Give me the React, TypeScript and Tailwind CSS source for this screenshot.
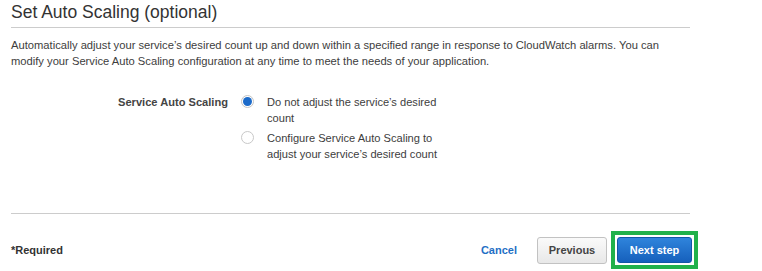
import React from "react";

export default function App() {
  return (
    <div
      className="w-[762px] h-[271px] bg-white overflow-hidden text-[#444]"
      style={{ fontFamily: '"Liberation Sans", Arial, sans-serif' }}
    >
      <div className="pl-[11px]">
        <div className="w-[679px]">
          <div className="h-[28px] border-b border-[#cccccc] text-[17.5px] leading-[24px] text-[#333]">
            Set Auto Scaling (optional)
          </div>
          <p className="mt-[9px] w-[665px] text-[11.2px] leading-[16px] text-[#3d3d3d]">
            Automatically adjust your service’s desired count up and down within a specified range in response to CloudWatch alarms. You can modify your Service Auto Scaling configuration at any time to meet the needs of your application.
          </p>
          <div className="mt-[25px] flex text-[11.1px] leading-[16px]">
            <div className="w-[217px] text-right font-bold text-[#444]">Service Auto Scaling</div>
            <div className="ml-[13px] flex flex-col gap-[4px] text-[#3d3d3d]">
              <div className="flex items-start">
                <div className="mt-[1px] w-[13px] h-[13px] rounded-full border border-[#c4c4c4] bg-white flex items-center justify-center">
                  <div className="w-[9px] h-[9px] rounded-full bg-[#1b6ac9]" />
                </div>
                <div className="ml-[13px] w-[176px]">Do not adjust the service’s desired count</div>
              </div>
              <div className="flex items-start">
                <div className="mt-[1px] w-[13px] h-[13px] rounded-full border border-[#c8c8c8] bg-white" />
                <div className="ml-[13px] w-[176px]">Configure Service Auto Scaling to adjust your service’s desired count</div>
              </div>
            </div>
          </div>
          <div className="mt-[51px] border-b border-[#cccccc]" />
        </div>
        <div className="w-[687px] mt-[17px] flex items-center justify-between">
          <div className="text-[11px] font-bold text-[#333]">*Required</div>
          <div className="flex items-center">
            <span className="text-[11px] font-bold text-[#1f6fc5]">Cancel</span>
            <button className="ml-[20px] w-[70px] h-[27px] rounded-[3px] border border-[#c2c2c2] bg-gradient-to-b from-[#fafafa] to-[#e8e8e8] text-[11px] font-bold text-[#444]">
              Previous
            </button>
            <div className="ml-[4px] border-4 border-[#21b14b] p-[2px] bg-white">
              <button className="block w-[75px] h-[26px] rounded-[3px] border border-[#1456a6] bg-gradient-to-b from-[#2f84dc] to-[#1660bc] text-[11px] font-bold text-white">
                Next step
              </button>
            </div>
          </div>
        </div>
      </div>
    </div>
  );
}
